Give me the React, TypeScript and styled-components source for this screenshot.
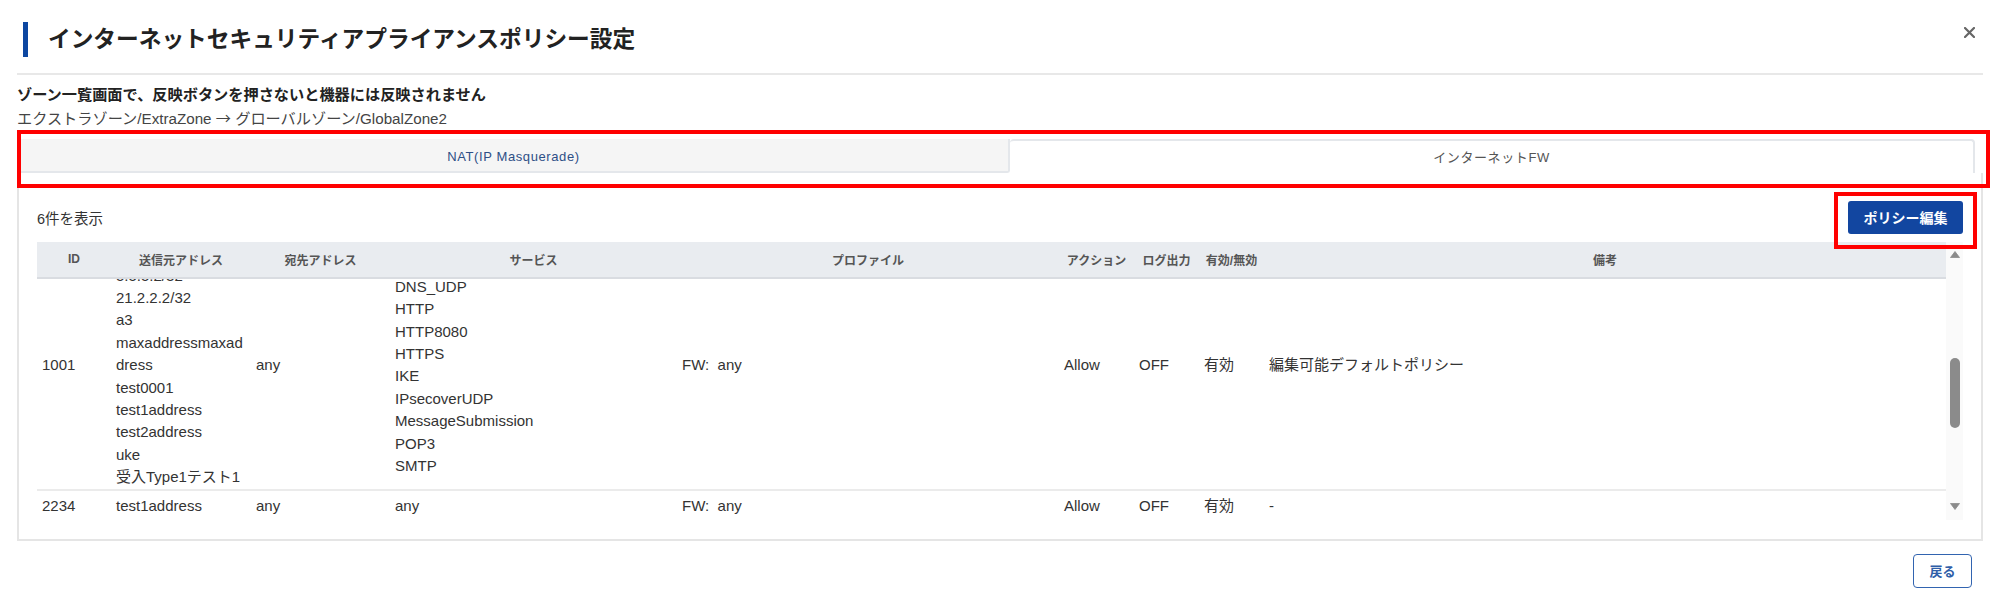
import React, { useLayoutEffect, useRef, useState } from "react";
import styled, { createGlobalStyle } from "styled-components";

const GlobalStyle = createGlobalStyle`
  html, body { margin: 0; padding: 0; background: #fff; }
  body {
    font-family: "Liberation Sans", "Noto Sans CJK JP", sans-serif;
    color: #333;
  }
  * { box-sizing: border-box; }
`;

const Page = styled.div`
  width: 2000px;
  height: 615px;
  padding: 0 17px;
  overflow: hidden;
`;

const Header = styled.header`
  display: flex;
  align-items: center;
  justify-content: space-between;
  padding: 22px 8px 16px 6px;
  border-bottom: 2px solid #e8e8e8;
`;

const TitleGroup = styled.div`
  display: flex;
  align-items: center;
  gap: 20px;
`;

const TitleBar = styled.span`
  flex: none;
  width: 5px;
  height: 35px;
  background: #0d47a1;
`;

const Title = styled.h1`
  margin: 0;
  font-size: 22.7px;
  line-height: 35px;
  font-weight: 700;
  color: #222;
`;

const CloseButton = styled.button`
  align-self: flex-start;
  margin-top: 4px;
  border: 0;
  background: none;
  padding: 0;
  width: 12px;
  height: 12px;
  display: flex;
  align-items: center;
  justify-content: center;
  cursor: pointer;
`;

const Notice = styled.div`
  margin-top: 8px;
  font-size: 15.2px;
  line-height: 23px;
`;

const NoticeStrong = styled.p`
  margin: 0;
  font-weight: 700;
  color: #222;
`;

const Route = styled.p`
  margin: 0;
  color: #444;
`;

const Arrow = styled.span`
  font-family: "Noto Sans CJK JP", sans-serif;
`;

const Annotated = styled.div`
  position: relative;
`;

const Highlight = styled.span<{ $l: number; $r: number; $t: number; $b: number }>`
  position: absolute;
  left: ${(p) => p.$l}px;
  right: ${(p) => p.$r}px;
  top: ${(p) => p.$t}px;
  bottom: ${(p) => p.$b}px;
  border: 4.5px solid #ff0000;
  pointer-events: none;
  z-index: 5;
`;

const TabArea = styled(Annotated)`
  margin-top: 8.5px;
`;

const Tabs = styled.div`
  display: grid;
  grid-template-columns: 993px 965px;
  height: 34px;
`;

const Tab = styled.button<{ $active?: boolean }>`
  font-family: inherit;
  font-size: 13px;
  letter-spacing: 0.6px;
  height: 34px;
  padding: ${(p) => (p.$active ? "0" : "3px 0 0")};
  cursor: pointer;
  color: ${(p) => (p.$active ? "#555" : "#2e4f86")};
  background: ${(p) => (p.$active ? "#fff" : "#f5f5f5")};
  border: 2px solid #e4e7eb;
  border-top-width: ${(p) => (p.$active ? "2px" : "0")};
  border-left-width: ${(p) => (p.$active ? "0" : "2px")};
  border-bottom-width: ${(p) => (p.$active ? "0" : "2px")};
  border-radius: ${(p) => (p.$active ? "4px 4px 0 0" : "0 0 3px 0")};
`;

const Panel = styled.section`
  border: 2px solid #e5e5e5;
  border-top: 0;
  padding: 28px 18px 19px;
`;

const Toolbar = styled.div`
  display: flex;
  align-items: center;
  justify-content: space-between;
  height: 33px;
`;

const Count = styled.span`
  font-size: 14.5px;
  color: #333;
`;

const PrimaryButton = styled.button`
  display: block;
  width: 115px;
  height: 33px;
  border: 0;
  border-radius: 3px;
  background: #1246a0;
  color: #fff;
  font-family: inherit;
  font-size: 14px;
  font-weight: 700;
  cursor: pointer;
`;

const TableFrame = styled.div`
  margin-top: 8px;
  height: 278px;
  display: flex;
`;

const TableScroll = styled.div`
  flex: 1;
  min-width: 0;
  overflow-y: scroll;
  overflow-x: hidden;
  scrollbar-width: none;
  &::-webkit-scrollbar {
    display: none;
  }
`;

const Rail = styled.div`
  flex: none;
  width: 17px;
  display: flex;
  flex-direction: column;
  background: #fafafa;
`;

const RailButton = styled.div`
  flex: none;
  height: 26px;
  display: flex;
  align-items: center;
  justify-content: center;
`;

const RailTrack = styled.div`
  flex: 1;
  position: relative;
`;

const Thumb = styled.div`
  position: absolute;
  left: 4px;
  width: 10px;
  border-radius: 5px;
  background: #8b8b8b;
`;

const Table = styled.table`
  width: 100%;
  table-layout: fixed;
  border-collapse: separate;
  border-spacing: 0;
`;

const Col = styled.col<{ $w?: number }>`
  width: ${(p) => (p.$w ? `${p.$w}px` : "auto")};
`;

const Th = styled.th`
  position: sticky;
  top: 0;
  z-index: 1;
  height: 37px;
  padding: 0 5px;
  background: #e9ecf0;
  border-bottom: 2px solid #d9dce1;
  font-size: 12px;
  font-weight: 700;
  color: #555;
  text-align: center;
  white-space: nowrap;
`;

const Td = styled.td`
  height: 34px;
  padding: 0 5px;
  vertical-align: middle;
  border-bottom: 2px solid #ebebeb;
  font-size: 15px;
  line-height: 22.4px;
  color: #333;
  text-align: left;
  word-break: break-all;
`;

const Line = styled.div`
  line-height: 22.4px;
`;

const Profile = styled.span`
  white-space: pre;
`;

const Footer = styled.div`
  display: flex;
  justify-content: flex-end;
  padding-right: 11px;
  margin-top: 13px;
`;

const BackButton = styled.button`
  width: 59px;
  height: 34px;
  border: 1.5px solid #3264b0;
  border-radius: 4px;
  background: #fff;
  color: #2f5ea8;
  font-family: inherit;
  font-size: 13px;
  font-weight: 700;
  cursor: pointer;
`;

type Row = {
  id: string;
  src: string[];
  dst: string[];
  svc: string[];
  profile: string;
  action: string;
  log: string;
  enabled: string;
  note: string;
};

const rows: Row[] = [
  {
    id: "100",
    src: ["any"],
    dst: ["any"],
    svc: ["FTP", "HTTP", "HTTPS", "ICMP", "IMAP", "POP3", "SSH"],
    profile: "FW:  any",
    action: "Allow",
    log: "OFF",
    enabled: "有効",
    note: "-",
  },
  {
    id: "500",
    src: ["10.0.0.0/8", "172.16.0.0/12", "192.168.0.0/16", "a1", "a2", "test0001", "test1address"],
    dst: ["any"],
    svc: ["any"],
    profile: "FW:  any",
    action: "Deny",
    log: "ON",
    enabled: "有効",
    note: "-",
  },
  {
    id: "1001",
    src: [
      "1.1.1.1/32",
      "5.5.5.2/32",
      "21.2.2.2/32",
      "a3",
      "maxaddressmaxaddress",
      "test0001",
      "test1address",
      "test2address",
      "uke",
      "受入Type1テスト1",
    ],
    dst: ["any"],
    svc: ["DNS_TCP", "DNS_UDP", "HTTP", "HTTP8080", "HTTPS", "IKE", "IPsecoverUDP", "MessageSubmission", "POP3", "SMTP"],
    profile: "FW:  any",
    action: "Allow",
    log: "OFF",
    enabled: "有効",
    note: "編集可能デフォルトポリシー",
  },
  {
    id: "2234",
    src: ["test1address"],
    dst: ["any"],
    svc: ["any"],
    profile: "FW:  any",
    action: "Allow",
    log: "OFF",
    enabled: "有効",
    note: "-",
  },
  {
    id: "3000",
    src: ["a1", "a2", "a3", "test0001", "test1address", "test2address"],
    dst: ["any"],
    svc: ["HTTP"],
    profile: "FW:  any",
    action: "Allow",
    log: "OFF",
    enabled: "無効",
    note: "-",
  },
  {
    id: "9999",
    src: ["any"],
    dst: ["any"],
    svc: ["DNS_UDP", "HTTP", "HTTPS", "SMTP", "POP3"],
    profile: "FW:  any",
    action: "Deny",
    log: "OFF",
    enabled: "有効",
    note: "-",
  },
];

const columns: { label: string; w?: number }[] = [
  { label: "ID", w: 74 },
  { label: "送信元アドレス", w: 140 },
  { label: "宛先アドレス", w: 139 },
  { label: "サービス", w: 287 },
  { label: "プロファイル", w: 382 },
  { label: "アクション", w: 75 },
  { label: "ログ出力", w: 65 },
  { label: "有効/無効", w: 65 },
  { label: "備考" },
];

const List = ({ items }: { items: string[] }) => (
  <>
    {items.map((t, i) => (
      <Line key={i}>{t}</Line>
    ))}
  </>
);

const Triangle = ({ down }: { down?: boolean }) => (
  <svg width="10" height="7" viewBox="0 0 10 7">
    <path
      d={down ? "M0.5 0.5 L9.5 0.5 L5 6.5 Z" : "M0.5 6.5 L9.5 6.5 L5 0.5 Z"}
      fill="#8b8b8b"
      stroke="#8b8b8b"
      strokeWidth="0.8"
      strokeLinejoin="round"
    />
  </svg>
);

export default function App() {
  const scrollRef = useRef<HTMLDivElement>(null);
  const trackRef = useRef<HTMLDivElement>(null);
  const focusRef = useRef<HTMLTableRowElement>(null);
  const [thumb, setThumb] = useState({ top: 0, height: 0 });

  const measure = () => {
    const box = scrollRef.current;
    const track = trackRef.current;
    if (!box || !track) return;
    const trackLen = track.clientHeight;
    const ratio = box.clientHeight / box.scrollHeight;
    const height = Math.max(20, trackLen * ratio);
    const maxScroll = box.scrollHeight - box.clientHeight;
    const top = maxScroll > 0 ? ((trackLen - height) * box.scrollTop) / maxScroll : 0;
    setThumb({ top, height });
  };

  useLayoutEffect(() => {
    const box = scrollRef.current;
    const row = focusRef.current;
    if (box && row) {
      box.scrollTop = Math.round(row.offsetTop - 1);
    }
    measure();
  }, []);

  return (
    <Page>
      <GlobalStyle />
      <Header>
        <TitleGroup>
          <TitleBar />
          <Title>インターネットセキュリティアプライアンスポリシー設定</Title>
        </TitleGroup>
        <CloseButton aria-label="close">
          <svg width="11" height="11" viewBox="0 0 11 11">
            <path d="M1 1 L10 10 M10 1 L1 10" stroke="#666" strokeWidth="2.2" strokeLinecap="round" />
          </svg>
        </CloseButton>
      </Header>

      <Notice>
        <NoticeStrong>ゾーン一覧画面で、反映ボタンを押さないと機器には反映されません</NoticeStrong>
        <Route>
          エクストラゾーン/ExtraZone <Arrow>→</Arrow> グローバルゾーン/GlobalZone2
        </Route>
      </Notice>

      <TabArea>
        <Tabs>
          <Tab>NAT(IP Masquerade)</Tab>
          <Tab $active>インターネットFW</Tab>
        </Tabs>
        <Highlight $l={0} $r={-7} $t={-9} $b={-15} />
      </TabArea>

      <Panel>
        <Toolbar>
          <Count>6件を表示</Count>
          <Annotated>
            <PrimaryButton>ポリシー編集</PrimaryButton>
            <Highlight $l={-14} $r={-14} $t={-9} $b={-15} />
          </Annotated>
        </Toolbar>

        <TableFrame>
          <TableScroll ref={scrollRef} onScroll={measure}>
            <Table>
              <colgroup>
                {columns.map((c, i) => (
                  <Col key={i} $w={c.w} />
                ))}
              </colgroup>
              <thead>
                <tr>
                  {columns.map((c) => (
                    <Th key={c.label}>{c.label}</Th>
                  ))}
                </tr>
              </thead>
              <tbody>
                {rows.map((r) => (
                  <tr key={r.id} ref={r.id === "1001" ? focusRef : undefined}>
                    <Td>{r.id}</Td>
                    <Td>
                      <List items={r.src} />
                    </Td>
                    <Td>
                      <List items={r.dst} />
                    </Td>
                    <Td>
                      <List items={r.svc} />
                    </Td>
                    <Td>
                      <Profile>{r.profile}</Profile>
                    </Td>
                    <Td>{r.action}</Td>
                    <Td>{r.log}</Td>
                    <Td>{r.enabled}</Td>
                    <Td>{r.note}</Td>
                  </tr>
                ))}
              </tbody>
            </Table>
          </TableScroll>
          <Rail>
            <RailButton>
              <Triangle />
            </RailButton>
            <RailTrack ref={trackRef}>
              <Thumb style={{ top: thumb.top, height: thumb.height }} />
            </RailTrack>
            <RailButton>
              <Triangle down />
            </RailButton>
          </Rail>
        </TableFrame>
      </Panel>

      <Footer>
        <BackButton>戻る</BackButton>
      </Footer>
    </Page>
  );
}
